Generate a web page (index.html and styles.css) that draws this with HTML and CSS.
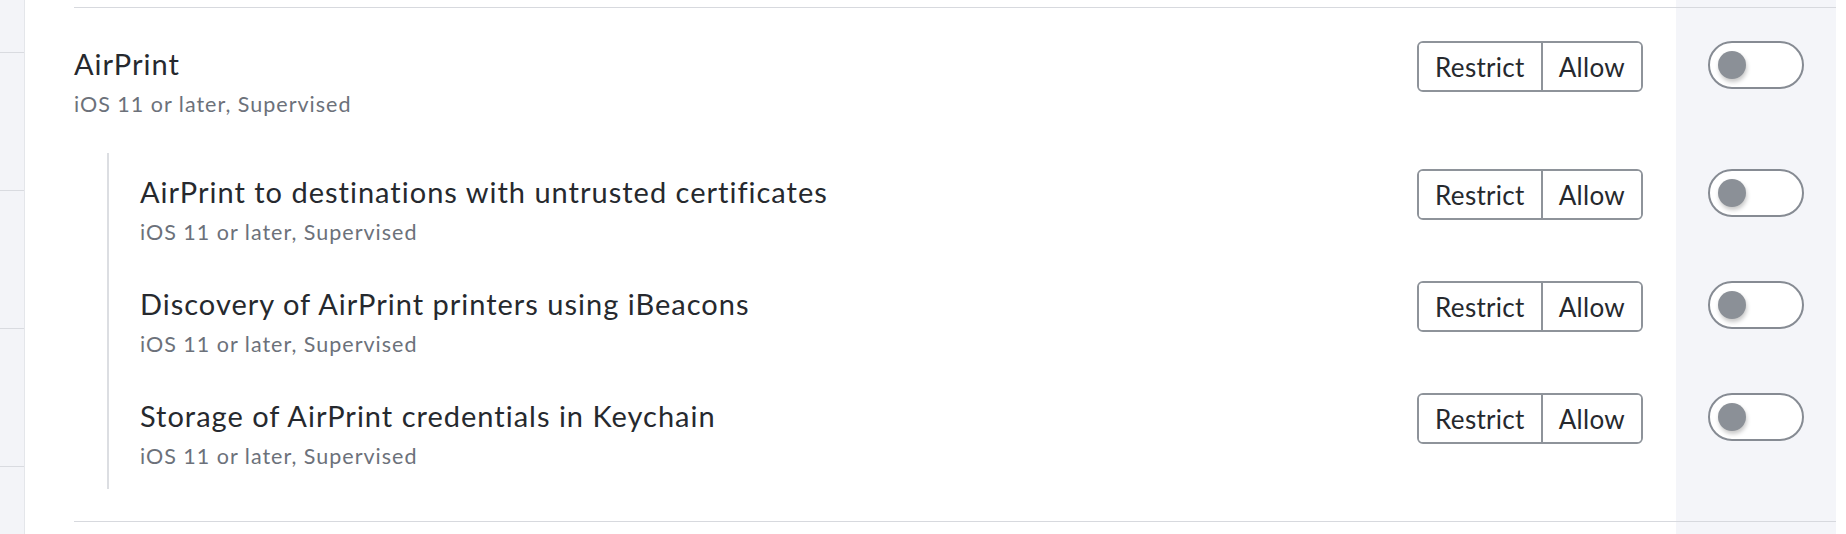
FILE: index.html
```html
<!DOCTYPE html>
<html>
<head>
<meta charset="utf-8">
<link rel="stylesheet" href="styles.css">
</head>
<body>
<div class="page">
  <aside class="sidebar">
    <div class="side-item first"></div>
    <div class="side-item"></div>
    <div class="side-item"></div>
    <div class="side-item"></div>
    <div class="side-item"></div>
  </aside>
  <main class="main">
    <section class="group">
      <div class="row">
        <div class="info">
          <div class="title">AirPrint</div>
          <div class="sub">iOS 11 or later, Supervised</div>
        </div>
        <div class="seg"><button class="seg-btn">Restrict</button><button class="seg-btn">Allow</button></div>
        <div class="toggle-cell"><span class="toggle"><span class="knob"></span></span></div>
      </div>
      <div class="children">
        <div class="row">
          <div class="info">
            <div class="title">AirPrint to destinations with untrusted certificates</div>
            <div class="sub">iOS 11 or later, Supervised</div>
          </div>
          <div class="seg"><button class="seg-btn">Restrict</button><button class="seg-btn">Allow</button></div>
          <div class="toggle-cell"><span class="toggle"><span class="knob"></span></span></div>
        </div>
        <div class="row">
          <div class="info">
            <div class="title">Discovery of AirPrint printers using iBeacons</div>
            <div class="sub">iOS 11 or later, Supervised</div>
          </div>
          <div class="seg"><button class="seg-btn">Restrict</button><button class="seg-btn">Allow</button></div>
          <div class="toggle-cell"><span class="toggle"><span class="knob"></span></span></div>
        </div>
        <div class="row">
          <div class="info">
            <div class="title">Storage of AirPrint credentials in Keychain</div>
            <div class="sub">iOS 11 or later, Supervised</div>
          </div>
          <div class="seg"><button class="seg-btn">Restrict</button><button class="seg-btn">Allow</button></div>
          <div class="toggle-cell"><span class="toggle"><span class="knob"></span></span></div>
        </div>
      </div>
    </section>
  </main>
</div>
</body>
</html>
```
FILE: styles.css
```css
* { box-sizing: border-box; }
html, body { margin: 0; padding: 0; background: #fff; }
body {
  font-family: "Lato", "Noto Sans", sans-serif;
  color: #26292e;
}
.page {
  display: flex;
  height: 534px;
  overflow: hidden;
}
.sidebar {
  flex: none;
  width: 25px;
  background: #f3f4f8;
  border-right: 1px solid #e4e6ea;
}
.side-item {
  height: 138px;
  border-bottom: 1px solid #d9dbe0;
}
.side-item.first { height: 53px; }
.main {
  flex: 1;
  padding: 7px 10px 0 49px;
  background: linear-gradient(90deg, #fff 0, #fff calc(100% - 170px), #f4f5f9 calc(100% - 170px), #f4f5f9 calc(100% - 10px), #fff calc(100% - 10px));
}
.group {
  border-top: 1px solid #d7d9de;
  border-bottom: 1px solid #d7d9de;
  padding: 17px 0 32px;
}
.row {
  display: flex;
  align-items: flex-start;
  height: 112px;
}
.info {
  flex: 1;
  padding-top: 24px;
}
.title {
  font-size: 29px;
  line-height: 30px;
  letter-spacing: 1px;
  color: #26292e;
}
.sub {
  font-size: 21.5px;
  line-height: 24px;
  letter-spacing: 1px;
  margin-top: 13px;
  color: #6c717a;
}
.seg {
  display: flex;
  margin-top: 16px;
  height: 51px;
  border: 2px solid #8e939a;
  border-radius: 6px;
  overflow: hidden;
}
.seg-btn {
  font-family: inherit;
  font-size: 26px;
  letter-spacing: 0.3px;
  color: #26292e;
  background: #fff;
  border: none;
  padding: 0 16px;
  margin: 0;
}
.seg-btn + .seg-btn { border-left: 2px solid #8e939a; }
.toggle-cell {
  flex: none;
  width: 160px;
  margin-left: 33px;
  padding-top: 16px;
  display: flex;
  justify-content: center;
}
.toggle {
  width: 96px;
  height: 48px;
  border: 2px solid #868b93;
  border-radius: 24px;
  background: #fff;
  display: flex;
  align-items: center;
  padding-left: 8px;
}
.knob {
  width: 28px;
  height: 28px;
  border-radius: 50%;
  background: #8b9097;
  box-shadow: 1px 3px 4px rgba(0, 0, 0, 0.22);
}
.children {
  margin-top: 16px;
  margin-left: 33px;
  border-left: 2px solid #dcdee2;
  padding-left: 31px;
}
```
